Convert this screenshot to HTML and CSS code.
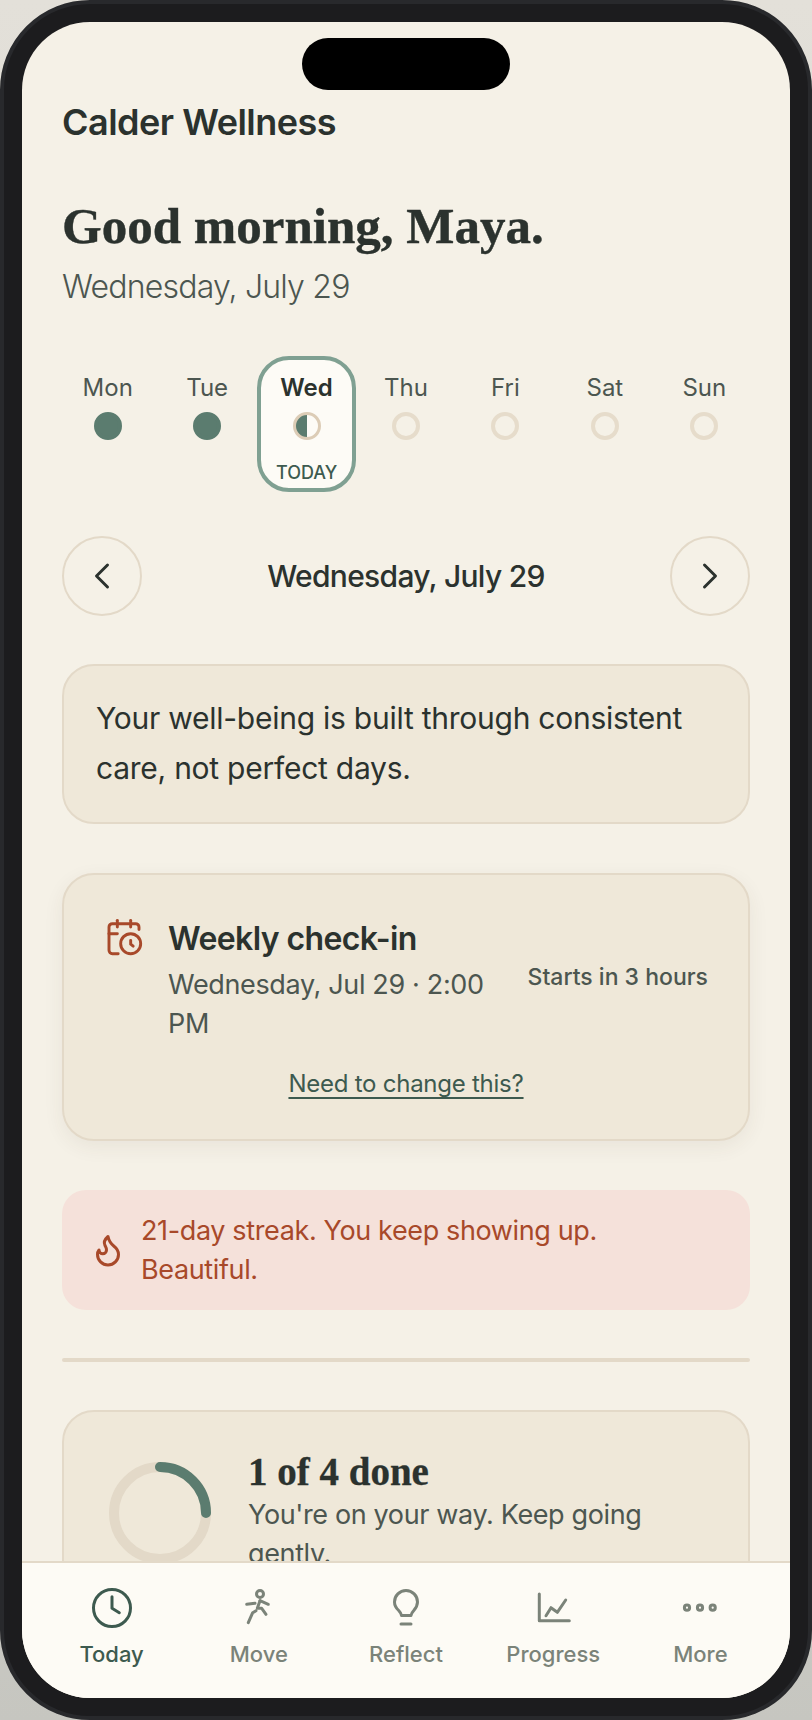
FILE: index.html
```html
<!DOCTYPE html>
<html lang="en">
<head>
    <meta charset="UTF-8">
    <meta name="viewport" content="width=device-width, initial-scale=1.0">
    <title>Calder Wellness</title>
    <link rel="stylesheet" href="styles.css">
</head>
<body>
    <div class="phone">
        <div class="screen">
            <div class="island"></div>

            <div class="content">
                <div class="brand">Calder Wellness</div>
                <h1 class="greeting">Good morning, Maya.</h1>
                <div class="today-date">Wednesday, July 29</div>

                <div class="week">
                    <div class="day"><span class="day-name">Mon</span><span class="dot dot-done"></span></div>
                    <div class="day"><span class="day-name">Tue</span><span class="dot dot-done"></span></div>
                    <div class="day day-current">
                        <span class="day-name">Wed</span><span class="dot dot-half"></span>
                        <span class="day-today">TODAY</span>
                    </div>
                    <div class="day"><span class="day-name">Thu</span><span class="dot"></span></div>
                    <div class="day"><span class="day-name">Fri</span><span class="dot"></span></div>
                    <div class="day"><span class="day-name">Sat</span><span class="dot"></span></div>
                    <div class="day"><span class="day-name">Sun</span><span class="dot"></span></div>
                </div>

                <div class="date-nav">
                    <button class="nav-btn" aria-label="Previous day">
                        <svg width="44" height="44" viewBox="0 0 24 24"><path d="m15 18-6-6 6-6"/></svg>
                    </button>
                    <div class="date-nav-title">Wednesday, July 29</div>
                    <button class="nav-btn" aria-label="Next day">
                        <svg width="44" height="44" viewBox="0 0 24 24"><path d="m9 18 6-6-6-6"/></svg>
                    </button>
                </div>

                <div class="card quote">Your well-being is built through consistent care, not perfect days.</div>

                <div class="card checkin">
                    <div class="checkin-main">
                        <svg class="checkin-icon" width="40" height="40" viewBox="0 0 24 24">
                            <path d="M21 7.5V6a2 2 0 0 0-2-2H5a2 2 0 0 0-2 2v14a2 2 0 0 0 2 2h3.5"/>
                            <path d="M16 2v4"/>
                            <path d="M8 2v4"/>
                            <path d="M3 10h5"/>
                            <path d="M17.5 17.5 16 16.3V14"/>
                            <circle cx="16" cy="16" r="6"/>
                        </svg>
                        <div class="checkin-text">
                            <div class="checkin-title">Weekly check-in</div>
                            <div class="checkin-when">Wednesday, Jul 29 · 2:00 PM</div>
                        </div>
                        <div class="checkin-starts">Starts in 3 hours</div>
                    </div>
                    <a class="checkin-link" href="#">Need to change this?</a>
                </div>

                <div class="streak">
                    <svg class="streak-icon" width="36" height="36" viewBox="0 0 24 24">
                        <path d="M8.5 14.5A2.5 2.5 0 0 0 11 12c0-1.38-.5-2-1-3-1.072-2.143-.224-4.054 2-6 .5 2.5 2 4.9 4 6.5 2 1.6 3 3.5 3 5.5a7 7 0 1 1-14 0c0-1.153.433-2.294 1-3a2.5 2.5 0 0 0 2.5 2.5z"/>
                    </svg>
                    <div>21-day streak. You keep showing up. Beautiful.</div>
                </div>

                <div class="divider"></div>

                <div class="card progress">
                    <svg class="ring" width="112" height="112" viewBox="0 0 112 112">
                        <circle class="ring-track" cx="56" cy="56" r="46"/>
                        <path class="ring-value" d="M56 10A46 46 0 0 1 102 56"/>
                    </svg>
                    <div class="progress-text">
                        <div class="progress-title">1 of 4 done</div>
                        <div class="progress-sub">You're on your way. Keep going gently.</div>
                    </div>
                </div>
            </div>

            <div class="tabbar">
                <div class="tab tab-active">
                    <svg width="44" height="44" viewBox="0 0 44 44">
                        <circle cx="22" cy="22" r="18.5"/>
                        <path d="M22 10.7v11.6l7.3 4.4"/>
                    </svg>
                    <span>Today</span>
                </div>
                <div class="tab">
                    <svg width="44" height="44" viewBox="0 0 44 44">
                        <circle cx="23" cy="8" r="3.5"/>
                        <path d="M9.7 18.3l8.3-1"/>
                        <path d="M23 14.7l8.3 3.6"/>
                        <path d="M23 14.7l-2.7 7.6h4.4l4.3 6"/>
                        <path d="M19 24.7l-3.3 2-4.4 10"/>
                    </svg>
                    <span>Move</span>
                </div>
                <div class="tab">
                    <svg width="44" height="44" viewBox="0 0 44 44">
                        <path d="M27 29.5h-9.500c-.4-2-1.400-3.500-2.800-5C12.500 22.500 10.500 20 10.500 16a11.500 11.500 0 0 1 23 0c0 4-2 6.500-3.700 8.500-1.400 1.500-2.400 3-2.800 5z"/>
                        <path d="M17 38h10"/>
                    </svg>
                    <span>Reflect</span>
                </div>
                <div class="tab">
                    <svg width="44" height="44" viewBox="0 0 44 44">
                        <path d="M8.300 8v26.700h30"/>
                        <path d="M15 29.700l5-8 6.300 4.600L34.700 14"/>
                    </svg>
                    <span>Progress</span>
                </div>
                <div class="tab">
                    <svg width="44" height="44" viewBox="0 0 44 44">
                        <circle cx="9" cy="21.700" r="2.600"/>
                        <circle cx="22" cy="21.700" r="2.600"/>
                        <circle cx="34.700" cy="21.700" r="2.600"/>
                    </svg>
                    <span>More</span>
                </div>
            </div>
        </div>
    </div>
</body>
</html>
```

FILE: styles.css
```css
* {
    box-sizing: border-box;
}

body {
    margin: 0;
    font-family: 'Inter', sans-serif;
    color: #2b322e;
    background: linear-gradient(180deg, #e3e0d9 0%, #d6d4cd 60%, #c6c6c0 100%);
}

svg {
    display: block;
    fill: none;
    stroke: currentColor;
    stroke-width: 2;
    stroke-linecap: round;
    stroke-linejoin: round;
}

.phone {
    width: 812px;
    height: 1720px;
    padding: 18px;
    border: 4px solid #28292c;
    border-radius: 90px;
    background-color: #1c1c1e;
}

.screen {
    position: relative;
    height: 100%;
    overflow: hidden;
    border-radius: 68px;
    background-color: #f5f1e7;
}

.island {
    position: absolute;
    top: 16px;
    left: 280px;
    width: 208px;
    height: 52px;
    border-radius: 26px;
    background-color: #000;
}

.content {
    padding: 80px 40px 0;
}

.brand {
    font-size: 36px;
    line-height: 40px;
    font-weight: 600;
    letter-spacing: -0.5px;
}

.greeting {
    margin: 54px 0 0;
    font-family: 'Liberation Serif', serif;
    font-size: 51px;
    line-height: 60px;
    font-weight: 700;
    -webkit-text-stroke: 0.4px #2b322e;
}

.today-date {
    margin-top: 11px;
    font-size: 32px;
    line-height: 40px;
    font-weight: 300;
    letter-spacing: -0.8px;
    color: #4c5650;
}

.week {
    display: grid;
    grid-template-columns: repeat(7, 1fr);
    gap: 8px;
    margin-top: 53px;
}

.day {
    display: flex;
    flex-direction: column;
    align-items: center;
    height: 128px;
    padding-top: 12px;
    border-radius: 28px;
}

.day-name {
    font-size: 24px;
    line-height: 32px;
    color: #4c5650;
}

.dot {
    width: 28px;
    height: 28px;
    margin-top: 8px;
    border: 4px solid #e6dccb;
    border-radius: 50%;
}

.dot-done {
    border-color: #5b7c6f;
    background-color: #5b7c6f;
}

.dot-half {
    border-width: 3px;
    border-color: #dcccb6;
    background: linear-gradient(90deg, #5b7c6f 50%, transparent 50%);
}

.day-current {
    background-color: #fdfbf6;
    outline: 4px solid #7fa092;
}

.day-current .day-name {
    font-weight: 600;
    color: #2b322e;
}

.day-today {
    margin-top: 23px;
    font-size: 18px;
    line-height: 20px;
    font-weight: 500;
    color: #3d5a4f;
}

.date-nav {
    display: flex;
    align-items: center;
    justify-content: space-between;
    margin-top: 48px;
}

.nav-btn {
    display: flex;
    align-items: center;
    justify-content: center;
    width: 80px;
    height: 80px;
    padding: 0;
    border: 2px solid #e3d9c8;
    border-radius: 50%;
    background: none;
    color: #2b322e;
}

.nav-btn svg {
    stroke-width: 1.6;
}

.date-nav-title {
    font-size: 30px;
    font-weight: 500;
    letter-spacing: -0.7px;
}

.card {
    border: 2px solid #e3d9c8;
    border-radius: 32px;
    background-color: #efe8d9;
}

.quote {
    margin-top: 48px;
    padding: 27px 32px 29px;
    font-size: 30px;
    line-height: 50px;
    font-weight: 400;
    letter-spacing: -0.25px;
}

.checkin {
    margin-top: 49px;
    height: 268px;
    padding: 42px 40px 0;
    box-shadow: 0 6px 20px rgba(70, 60, 40, 0.07);
}

.checkin-main {
    display: flex;
    align-items: center;
    gap: 24px;
}

.checkin-icon {
    align-self: flex-start;
    flex: none;
    stroke-width: 1.75;
    color: #a8492a;
}

.checkin-text {
    flex: 1;
}

.checkin-title {
    font-size: 32px;
    line-height: 44px;
    font-weight: 600;
    letter-spacing: -0.6px;
}

.checkin-when {
    margin-top: 4px;
    font-size: 27px;
    line-height: 39px;
    letter-spacing: -0.35px;
    color: #4c5650;
}

.checkin-starts {
    flex: none;
    margin-bottom: 6px;
    font-size: 23px;
    font-weight: 500;
    color: #4c5650;
}

.checkin-link {
    display: block;
    margin-top: 25px;
    font-size: 24px;
    line-height: 32px;
    letter-spacing: -0.25px;
    text-align: center;
    text-decoration-thickness: 2px;
    text-decoration-skip-ink: none;
    text-underline-offset: 5px;
    color: #3d5a4f;
}

.streak {
    display: flex;
    align-items: center;
    gap: 15px;
    margin-top: 49px;
    padding: 21px 40px 21px 28px;
    border-radius: 24px;
    background-color: #f5e1da;
    font-size: 27px;
    line-height: 39px;
    letter-spacing: -0.37px;
    color: #a8492a;
}

.streak-icon {
    flex: none;
}

.divider {
    height: 4px;
    margin-top: 48px;
    border-radius: 2px;
    background-color: #e3d9c8;
}

.progress {
    display: flex;
    align-items: center;
    gap: 32px;
    margin-top: 48px;
    padding: 40px;
}

.ring {
    flex: none;
}

.ring-track {
    stroke: #e3d9c8;
    stroke-width: 10;
}

.ring-value {
    stroke: #5b7c6f;
    stroke-width: 10;
}

.progress-title {
    font-family: 'Liberation Serif', serif;
    font-size: 39px;
    line-height: 40px;
    font-weight: 700;
    -webkit-text-stroke: 0.3px #2b322e;
}

.progress-sub {
    margin-top: 3px;
    font-size: 27px;
    line-height: 39px;
    letter-spacing: -0.37px;
    color: #4c5650;
}

.tabbar {
    position: absolute;
    left: 0;
    right: 0;
    bottom: 0;
    display: grid;
    grid-template-columns: repeat(5, 1fr);
    height: 137px;
    padding: 23px 16px 0;
    border-top: 2px solid #e3d9c8;
    background-color: #fdfbf5;
}

.tab {
    display: flex;
    flex-direction: column;
    align-items: center;
    color: #7b8379;
}

.tab svg {
    stroke-width: 3;
}

.tab span {
    margin-top: 8px;
    font-size: 22px;
    line-height: 32px;
    font-weight: 500;
}

.tab-active {
    color: #3d5a4f;
}
```
